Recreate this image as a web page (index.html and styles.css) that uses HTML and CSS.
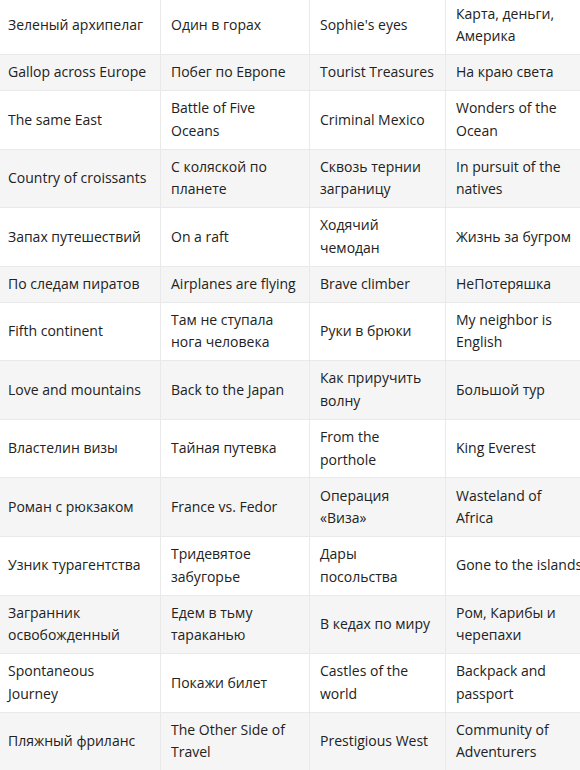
FILE: index.html
```html
<!DOCTYPE html>
<html lang="ru">
<head>
<meta charset="utf-8">
<title>Названия</title>
<link rel="stylesheet" href="styles.css">
</head>
<body>
<div class="wrap">
<table class="names">
<colgroup><col class="c1"><col class="c2"><col class="c3"><col class="c4"></colgroup>
<tbody>
<tr><td>Зеленый архипелаг</td><td>Один в горах</td><td>Sophie's eyes</td><td>Карта, деньги, Америка</td></tr>
<tr><td>Gallop across Europe</td><td>Побег по Европе</td><td>Tourist Treasures</td><td>На краю света</td></tr>
<tr><td>The same East</td><td>Battle of Five Oceans</td><td>Criminal Mexico</td><td>Wonders of the Ocean</td></tr>
<tr><td>Country of croissants</td><td>С коляской по планете</td><td>Сквозь тернии заграницу</td><td>In pursuit of the natives</td></tr>
<tr><td>Запах путешествий</td><td>On a raft</td><td>Ходячий чемодан</td><td>Жизнь за бугром</td></tr>
<tr><td>По следам пиратов</td><td>Airplanes are flying</td><td>Brave climber</td><td>НеПотеряшка</td></tr>
<tr><td>Fifth continent</td><td>Там не ступала нога человека</td><td>Руки в брюки</td><td>My neighbor is English</td></tr>
<tr><td>Love and mountains</td><td>Back to the Japan</td><td>Как приручить волну</td><td>Большой тур</td></tr>
<tr><td>Властелин визы</td><td>Тайная путевка</td><td>From the porthole</td><td>King Everest</td></tr>
<tr><td>Роман с рюкзаком</td><td>France vs. Fedor</td><td>Операция «Виза»</td><td>Wasteland of<br>Africa</td></tr>
<tr><td>Узник турагентства</td><td>Тридевятое забугорье</td><td>Дары посольства</td><td class="nowrap">Gone to the islands</td></tr>
<tr><td>Загранник освобожденный</td><td>Едем в тьму тараканью</td><td>В кедах по миру</td><td>Ром, Карибы и черепахи</td></tr>
<tr><td>Spontaneous<br>Journey</td><td>Покажи билет</td><td>Castles of the world</td><td>Backpack and passport</td></tr>
<tr><td>Пляжный фриланс</td><td>The Other Side of Travel</td><td>Prestigious West</td><td>Community of Adventurers</td></tr>
</tbody>
</table>
</div>
</body>
</html>
```
FILE: styles.css
```css
html, body {
  margin: 0;
  padding: 0;
  background: #ffffff;
}
.wrap {
  width: 580px;
  height: 770px;
  overflow: hidden;
}
.names {
  margin: -3.5px 0 0 -2px;
  border-collapse: separate;
  border-spacing: 0;
  table-layout: fixed;
  width: 608px;
  font-family: "Open Sans", "Liberation Sans", sans-serif;
  font-size: 14px;
  line-height: 22.6px;
  color: #222222;
}
.c1 { width: 163px; }
.c2 { width: 149px; }
.c3 { width: 136px; }
.c4 { width: 160px; }
.names td {
  padding: 6.2px 10px;
  border-right: 1px solid #e9e9e9;
  border-bottom: 1px solid #e9e9e9;
  vertical-align: middle;
}
.names td.nowrap {
  white-space: nowrap;
}
.names tr:nth-child(even) td {
  background: #f5f5f5;
}
```
